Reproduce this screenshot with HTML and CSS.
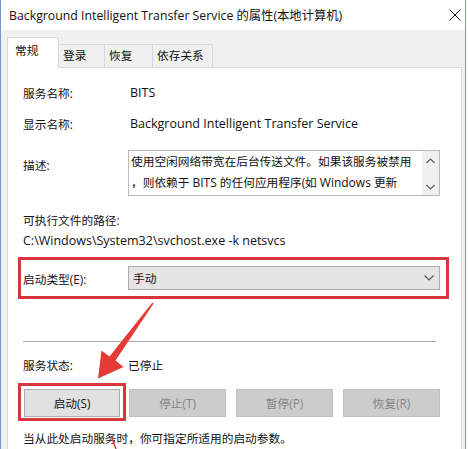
FILE: index.html
```html
<!DOCTYPE html>
<html lang="zh-CN">
<head>
<meta charset="utf-8">
<title>BITS 属性</title>
<link rel="stylesheet" href="styles.css">
</head>
<body>
<div class="window">
  <div class="titlebar">
    <span class="title"><span class="en">Background Intelligent Transfer Service</span> 的属性(本地计算机)</span>
    <svg class="close" width="12" height="12" viewBox="0 0 12 12"><path d="M0.5 0.5 L11.5 11.5 M11.5 0.5 L0.5 11.5" stroke="#111" stroke-width="1" fill="none"/></svg>
  </div>
  <div class="tabs">
    <div class="tab active t1">常规</div>
    <div class="tab t2">登录</div>
    <div class="tab t3">恢复</div>
    <div class="tab t4">依存关系</div>
  </div>
  <div class="panel">
    <div class="row r1"><span class="label wide">服务名称:</span><span class="en">BITS</span></div>
    <div class="row r2"><span class="label wide">显示名称:</span><span class="en">Background Intelligent Transfer Service</span></div>
    <div class="row desc">
      <span class="label desc-label">描述:</span>
      <div class="textbox">
        <div class="textbox-text">使用空闲网络带宽在后台传送文件。如果该服务被禁用<br>，则依赖于 <span class="en">BITS</span> 的任何应用程序(如 <span class="en">Windows</span> 更新</div>
        <div class="scrollbar">
          <svg width="9" height="6" viewBox="0 0 9 6"><path d="M0.5 5 L4.5 1 L8.5 5" stroke="#606060" stroke-width="1.2" fill="none"/></svg>
          <svg width="9" height="6" viewBox="0 0 9 6"><path d="M0.5 1 L4.5 5 L8.5 1" stroke="#606060" stroke-width="1.2" fill="none"/></svg>
        </div>
      </div>
    </div>
    <div class="pathlabel">可执行文件的路径:</div>
    <div class="path en">C:\Windows\System32\svchost.exe -k netsvcs</div>
    <div class="redbox startup">
      <span class="label">启动类型(E):</span>
      <div class="combo">
        <span>手动</span>
        <svg width="10" height="6" viewBox="0 0 10 6"><path d="M0.5 0.5 L5 5 L9.5 0.5" stroke="#555" stroke-width="1.1" fill="none"/></svg>
      </div>
    </div>
    <div class="sep"></div>
    <div class="row status"><span class="label">服务状态:</span><span>已停止</span></div>
    <div class="buttons">
      <div class="redbox btnwrap"><div class="btn">启动(S)</div></div>
      <div class="btn disabled b2">停止(T)</div>
      <div class="btn disabled b3">暂停(P)</div>
      <div class="btn disabled b4">恢复(R)</div>
    </div>
    <div class="hint">当从此处启动服务时，你可指定所适用的启动参数。</div>
  </div>
  <svg class="arrow" width="468" height="449" viewBox="0 0 468 449">
    <polygon points="152.4,302.6 153.6,303.4 115.5,360.5 123.5,367 98,378.5 101.5,350.5 109.5,356.5" fill="#e53a36"/>
    <path d="M111.5 437 L116 449" stroke="#e53a36" stroke-width="1.5" fill="none"/>
  </svg>
</div>
</body>
</html>
```
FILE: styles.css
```css
html, body {
  margin: 0;
  padding: 0;
  background: #ffffff;
}
body {
  font-family: "Open Sans", "Noto Sans CJK SC", sans-serif;
  font-size: 11.7px;
  color: #111;
  width: 468px;
  height: 449px;
  overflow: hidden;
}
.en {
  font-size: 12.5px;
}
.window {
  position: relative;
  width: 464px;
  height: 449px;
  border-left: 1px solid #6f9ad0;
  border-right: 1px solid #6f9ad0;
  background: #f0f0f0;
  overflow: hidden;
}
.titlebar {
  height: 30px;
  background: #ffffff;
  display: flex;
  align-items: center;
  padding-left: 8px;
  padding-right: 4px;
  justify-content: space-between;
}
.title {
  font-size: 12.3px;
  line-height: 16px;
  margin-top: 1px;
}
.title .en {
  font-size: 12.3px;
}
.tabs {
  height: 37px;
  display: flex;
  align-items: flex-end;
  padding-left: 6px;
  position: relative;
  z-index: 2;
}
.tab {
  box-sizing: border-box;
  height: 23px;
  border: 1px solid #d9d9d9;
  border-bottom: none;
  background: #f0f0f0;
  margin-left: -1px;
  padding-top: 1px;
  padding-left: 4px;
  line-height: 18px;
}
.tab.active {
  height: 31px;
  background: #ffffff;
  margin-left: 0;
  margin-bottom: -1px;
  padding-top: 3px;
  padding-left: 7px;
  position: relative;
  z-index: 2;
}
.t1 { width: 52px; }
.t2 { width: 47px; }
.t3 { width: 49px; }
.t4 { width: 61px; }
.panel {
  position: relative;
  z-index: 1;
  box-sizing: border-box;
  width: 455px;
  height: 400px;
  margin-left: 6px;
  background: #ffffff;
  border: 1px solid #d9d9d9;
  padding: 0 15px;
}
.row {
  display: flex;
  align-items: flex-start;
  line-height: 20px;
}
.label {
  width: 105px;
  flex: none;
}
.label.wide {
  width: 107px;
}
.r1 { margin-top: 15px; }
.r2 { margin-top: 11px; }
.desc { margin-top: 16px; }
.desc-label { padding-top: 5px; }
.textbox {
  box-sizing: border-box;
  width: 312px;
  height: 46px;
  border: 1px solid #b9b9b9;
  display: flex;
  background: #fff;
}
.textbox-text {
  flex: 1;
  padding: 0 0 0 2px;
  line-height: 21px;
  white-space: nowrap;
  overflow: hidden;
}
.textbox-text .en {
  font-size: 12px;
}
.scrollbar {
  width: 17px;
  background: #f0f0f0;
  display: flex;
  flex-direction: column;
  justify-content: space-between;
  align-items: center;
  padding: 7px 0 5px;
}
.pathlabel {
  margin-top: 14px;
  line-height: 20px;
}
.path {
  margin-top: 1px;
  line-height: 20px;
}
.redbox {
  border: 3px solid #d8363a;
  box-sizing: border-box;
}
.startup {
  margin: 6px -3px 0 -5px;
  height: 42px;
  display: flex;
  align-items: center;
  padding-left: 2px;
}
.combo {
  box-sizing: border-box;
  width: 312px;
  height: 24px;
  background: #e5e5e5;
  border: 1px solid #adadad;
  display: flex;
  align-items: center;
  justify-content: space-between;
  padding: 0 5px 0 4px;
  line-height: 20px;
}
.sep {
  margin-top: 42px;
  width: 413px;
  height: 1px;
  background: #a9a9a9;
}
.status {
  margin-top: 13px;
}
.buttons {
  margin-top: 8px;
  display: flex;
  align-items: flex-start;
}
.btnwrap {
  margin-left: -5px;
  padding: 3px 3px 1px 3px;
  height: 38px;
}
.btn {
  box-sizing: border-box;
  width: 96px;
  height: 28px;
  border: 1px solid #adadad;
  background: #e1e1e1;
  display: flex;
  align-items: center;
  justify-content: center;
  line-height: 20px;
}
.btn.disabled {
  background: #cccccc;
  border-color: #bfbfbf;
  color: #858585;
  width: 97px;
  margin-top: 6px;
}
.b2 { margin-left: 3px; }
.b3 { margin-left: 10px; }
.b4 { margin-left: 10px; }
.hint {
  margin-top: 7px;
  line-height: 20px;
}
.arrow {
  position: absolute;
  left: -1px;
  top: 0;
  z-index: 5;
  pointer-events: none;
}
```
